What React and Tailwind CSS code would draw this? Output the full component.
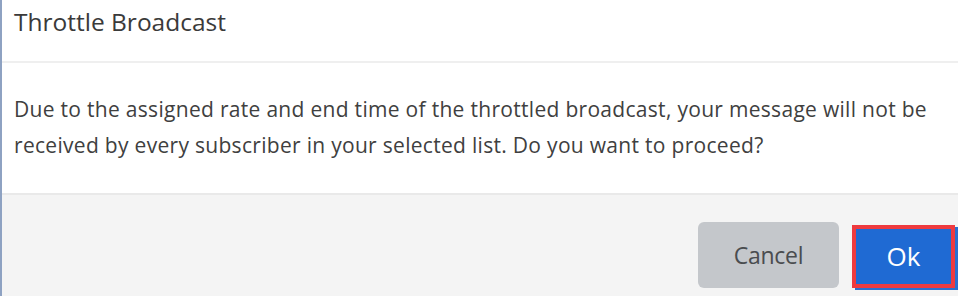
export default function App() {
  return (
    <div className="w-[960px] h-[296px] bg-white overflow-hidden" style={{ fontFamily: '"Open Sans", Arial, sans-serif' }}>
      <div className="w-[958px] h-[296px] border-l-2 border-[#8ea2c2] flex flex-col">
        <div className="h-[63px] shrink-0 border-b-2 border-[#efefef] pl-[12px] pt-[6px]">
          <h1 className="text-[24.5px] leading-[32px] text-[#3a3a3a] tracking-[0px]">Throttle Broadcast</h1>
        </div>
        <div className="h-[132px] shrink-0 border-b-2 border-[#e9e9e9] pl-[12px] pt-[28px]">
          <p className="text-[21px] leading-[36px] text-[#404040] tracking-[0.3px]">
            Due to the assigned rate and end time of the throttled broadcast, your message will not be
            <br />
            received by every subscriber in your selected list. Do you want to proceed?
          </p>
        </div>
        <div className="flex-1 bg-[#f4f4f4] flex justify-end items-start pt-[27px] pr-[3px] gap-[13px]">
          <button className="w-[141px] h-[66px] rounded-[6px] bg-[#c4c7cb] text-[#4a4c4f] text-[23px] tracking-[-0.3px]">Cancel</button>
          <button className="mt-[3px] w-[103px] h-[63px] border-4 border-[#ee3a3f] bg-[#1f6ad3] text-white text-[26px] shadow-[3px_2px_0_#2b6fcf]">Ok</button>
        </div>
      </div>
    </div>
  );
}
